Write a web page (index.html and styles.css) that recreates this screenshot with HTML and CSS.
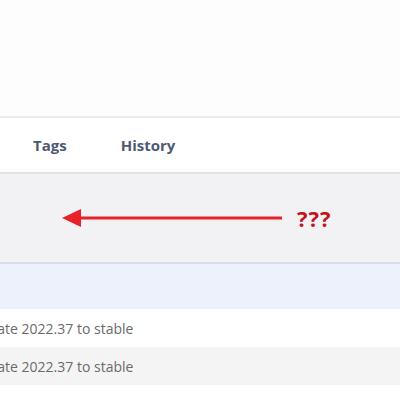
FILE: index.html
```html
<!DOCTYPE html>
<html lang="en">
<head>
    <meta charset="UTF-8">
    <title>Pipeline history</title>
    <link rel="stylesheet" href="styles.css">
</head>
<body>
    <div class="header"></div>

    <nav class="tabs">
        <span class="tab">Tags</span>
        <span class="tab">History</span>
    </nav>

    <div class="notice">
        <svg class="arrow" width="222" height="20" viewBox="0 0 222 20">
            <line x1="16" y1="10" x2="220" y2="10" stroke="#e8202a" stroke-width="3"/>
            <polygon points="0,10 19,1 19,19" fill="#e8202a"/>
        </svg>
        <span class="marks">???</span>
    </div>

    <div class="selected-row"></div>

    <ul class="history">
        <li class="row"><span class="msg">Update 2022.37 to stable</span></li>
        <li class="row alt"><span class="msg">Update 2022.37 to stable</span></li>
        <li class="row"><span class="tag">in</span></li>
    </ul>
</body>
</html>
```

FILE: styles.css
```css
body {
    margin: 0;
    background: #fdfdfd;
    font-family: "Open Sans", "Noto Sans", sans-serif;
    overflow: hidden;
}
.header {
    height: 116px;
    background: #fdfdfd;
    border-bottom: 2px solid #ececec;
}
.tabs {
    display: flex;
    gap: 54px;
    align-items: center;
    height: 54px;
    padding-left: 33px;
    background: #fff;
    border-bottom: 2px solid #e4e4e4;
}
.tab {
    font-size: 15px;
    font-weight: 700;
    color: #4f5974;
}
.notice {
    display: flex;
    align-items: center;
    height: 88px;
    padding-left: 62px;
    background: #f2f2f4;
    border-bottom: 2px solid #d6dde8;
}
.arrow {
    display: block;
}
.marks {
    margin-left: 13px;
    font-size: 22px;
    font-weight: 700;
    color: #c4121b;
    letter-spacing: 1px;
}
.selected-row {
    height: 45px;
    background: #edf1fb;
}
.history {
    list-style: none;
    margin: 0;
    padding: 0;
}
.row {
    height: 38px;
    display: flex;
    align-items: center;
    background: #fff;
    font-size: 14px;
    color: #6a6a6a;
}
.row.alt {
    background: #f4f4f4;
}
.msg {
    margin-left: -30px;
}
.tag {
    margin-left: 140px;
    margin-top: 34px;
    color: #8a7fd0;
}
```
